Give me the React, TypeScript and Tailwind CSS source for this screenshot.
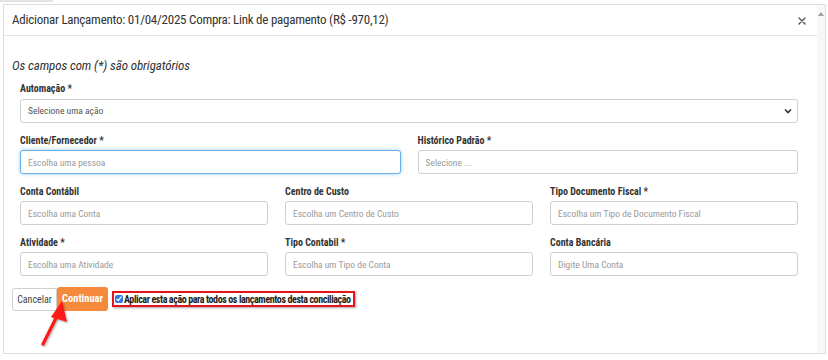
const inputCls =
  'h-[24px] w-full rounded-[3px] border border-[#cfcfcf] bg-white px-[7px] text-[9.5px] text-[#333] placeholder:text-[#9a9a9a] outline-none';

const Field = ({ label, placeholder, focused }: { label: string; placeholder: string; focused?: boolean }) => (
  <div className="flex flex-col">
    <label className="mb-[2px] h-[14px] text-[10px] font-bold leading-[14px] text-[#333]">{label}</label>
    <input
      className={
        focused
          ? 'h-[24px] w-full rounded-[3px] border border-[#66afe9] bg-white px-[7px] text-[9.5px] text-[#333] placeholder:text-[#9a9a9a] shadow-[0_0_4px_rgba(102,175,233,0.6)] outline-none'
          : inputCls
      }
      placeholder={placeholder}
      readOnly
    />
  </div>
);

const Arrow = () => (
  <svg className="pointer-events-none absolute left-[36px] top-[296px] drop-shadow-[1px_1px_1px_rgba(0,0,0,0.35)]" width="40" height="56" viewBox="0 0 40 56">
    <line x1="7" y1="48" x2="21" y2="20" stroke="#ff1a1a" strokeWidth="3.2" strokeLinecap="round" />
    <polygon points="26,5 15,21 31,26" fill="#ff1a1a" />
  </svg>
);

export default function App() {
  return (
    <div className="relative h-[360px] w-[828px] overflow-hidden bg-white font-['Roboto_Condensed','Liberation_Sans',sans-serif] text-[#333]">
      <div className="h-[3px]">
        <div className="h-[2px] w-[53px] bg-[#e4e4e4]" />
      </div>
      <div className="ml-[3px] mt-[1px] flex h-[350px] w-[823px] border border-[#dedede]">
        <div className="flex flex-1 flex-col">
          <div className="flex h-[31px] items-center justify-between border-b border-[#e3e3e3] pl-[8px] pr-[11px]">
            <h4 className="text-[13px] tracking-[-0.25px] text-[#333]">
              Adicionar Lançamento: 01/04/2025 Compra: Link de pagamento (R$ -970,12)
            </h4>
            <svg width="8" height="8" viewBox="0 0 8 8" className="mt-[1px]">
              <path d="M1 1 L7 7 M7 1 L1 7" stroke="#555" strokeWidth="1.4" strokeLinecap="round" />
            </svg>
          </div>
          <div className="flex flex-col px-[8px]">
            <p className="mt-[21px] h-[18px] text-[13px] italic leading-[18px] tracking-[-0.1px] text-[#333]">
              Os campos com (*) são obrigatórios
            </p>
            <div className="mt-[7px] flex flex-col gap-[11px] pl-[8px] pr-[11px]">
              <div className="flex flex-col">
                <label className="mb-[3px] h-[14px] text-[10px] font-bold leading-[14px] text-[#333]">Automação *</label>
                <div className="flex h-[24px] items-center justify-between rounded-[3px] border border-[#cfcfcf] bg-white pl-[7px] pr-[5px] text-[9.5px] text-[#555]">
                  <span>Selecione uma ação</span>
                  <svg width="8" height="6" viewBox="0 0 8 6">
                    <path d="M1 1.5 L4 4.5 L7 1.5" fill="none" stroke="#333" strokeWidth="1.6" />
                  </svg>
                </div>
              </div>
              <div className="grid grid-cols-2 gap-x-[17px]">
                <Field label="Cliente/Fornecedor *" placeholder="Escolha uma pessoa" focused />
                <Field label="Histórico Padrão *" placeholder="Selecione ..." />
              </div>
              <div className="grid grid-cols-3 gap-x-[17px]">
                <Field label="Conta Contábil" placeholder="Escolha uma Conta" />
                <Field label="Centro de Custo" placeholder="Escolha um Centro de Custo" />
                <Field label="Tipo Documento Fiscal *" placeholder="Escolha um Tipo de Documento Fiscal" />
              </div>
              <div className="grid grid-cols-3 gap-x-[17px]">
                <Field label="Atividade *" placeholder="Escolha uma Atividade" />
                <Field label="Tipo Contabil *" placeholder="Escolha um Tipo de Conta" />
                <Field label="Conta Bancária" placeholder="Digite Uma Conta" />
              </div>
            </div>
            <div className="mt-[11px] flex items-center">
              <button className="h-[23px] w-[45px] rounded-l-[3px] border border-[#d0d0d0] bg-white text-[10px] text-[#444]">
                Cancelar
              </button>
              <button className="h-[24px] w-[51px] rounded-[3px] bg-[#f58a3c] text-[10.5px] font-bold text-white">
                Continuar
              </button>
              <label className="ml-[4px] flex h-[16px] items-center gap-[1px] border-2 border-[#e8141c] pl-[1px] pr-[2px] text-[10px] font-bold tracking-[-0.4px] text-[#222] shadow-[1px_1px_2px_rgba(0,0,0,0.35)]">
                <input type="checkbox" checked readOnly className="h-[8px] w-[8px] accent-[#2d7be0]" />
                Aplicar esta ação para todos os lançamentos desta conciliação
              </label>
            </div>
          </div>
        </div>
        <div className="flex w-[8px] flex-col items-center bg-[#f7f7f7]">
          <svg width="6" height="4" viewBox="0 0 6 4" className="mt-[7px]">
            <polygon points="3,0 6,4 0,4" fill="#a0a0a0" />
          </svg>
        </div>
      </div>
      <Arrow />
    </div>
  );
}
